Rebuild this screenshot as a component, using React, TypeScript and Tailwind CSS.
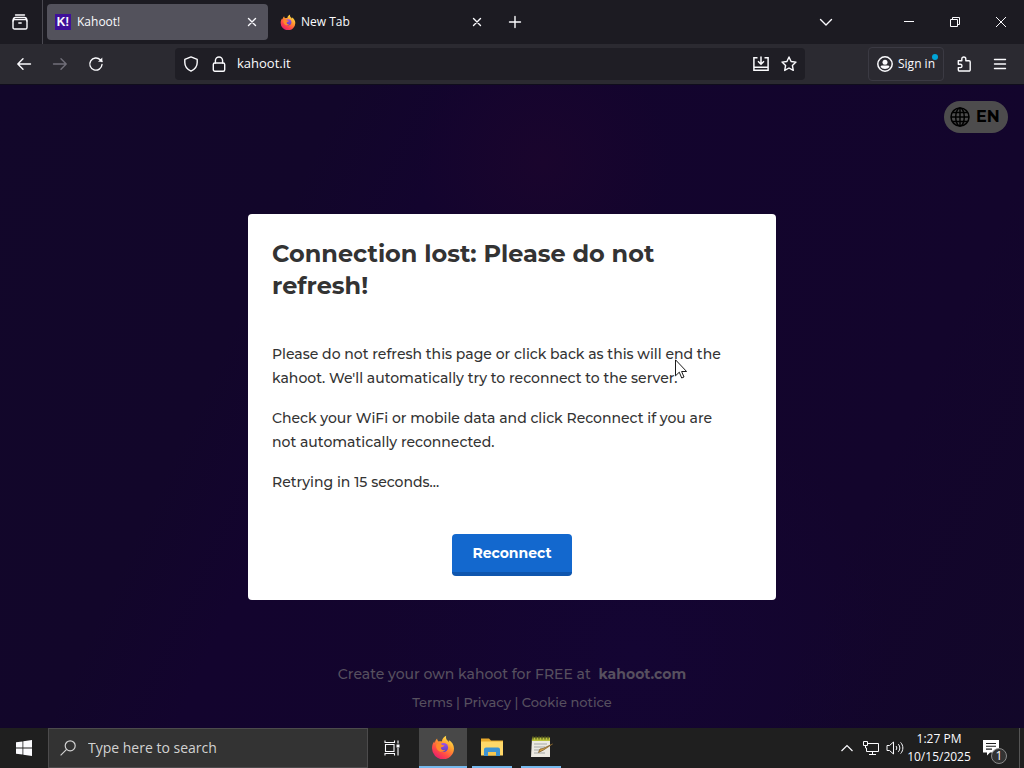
import type { ReactNode } from "react";

function FirefoxLogo({ id, className }: { id: string; className: string }) {
  return (
    <svg viewBox="0 0 24 24" className={className} aria-hidden="true">
      <defs>
        <linearGradient id={`${id}-body`} x1="0.8" y1="0.1" x2="0.25" y2="0.95">
          <stop offset="0" stopColor="#ffe14a" />
          <stop offset="0.35" stopColor="#ff9a2e" />
          <stop offset="0.7" stopColor="#ff4b45" />
          <stop offset="1" stopColor="#e8206c" />
        </linearGradient>
        <linearGradient id={`${id}-globe`} x1="0.5" y1="0" x2="0.5" y2="1">
          <stop offset="0" stopColor="#a052e8" />
          <stop offset="1" stopColor="#5a3fc0" />
        </linearGradient>
      </defs>
      <path
        fill={`url(#${id}-body)`}
        d="M15.2.8c-.6 2 .1 3.500 1.600 5 .6.600 1 1.100 1.300 1.700.1-.9-.1-1.700-.5-2.500 3.300 1.700 5.400 5 5.400 8.500A11 11 0 0 1 1 13.200c0-3 .9-5.300 2.300-7 .1 1 .3 1.500.6 1.900.2-1.800.9-3.300 2.200-4.600.1 1.300.6 2.200 1.500 2.900 1.300-.4 2.500-.2 3.300.1C11.200 3.900 12.700 1.900 15.200.8z"
      />
      <circle cx="12.500" cy="12.500" r="4.600" fill={`url(#${id}-globe)`} />
      <path fill="#ff8a2a" d="M5.500 9c2-.8 3.700-.6 5 .4 1 .7 2.200.8 3 .8-.4 1.300-1.700 1.600-2.700 1.900-.8.300-1 1-.7 1.700.6 1.400 2.300 1.900 4.300 1-1.200 2.300-5.800 3.300-8.200-.3C5 12.600 4.800 10.600 5.500 9z" />
    </svg>
  );
}

function Stroke({ children, className = "h-4 w-4" }: { children: ReactNode; className?: string }) {
  return (
    <svg
      viewBox="0 0 16 16"
      className={`${className} shrink-0`}
      fill="none"
      stroke="currentColor"
      strokeWidth="1.4"
      strokeLinecap="round"
      strokeLinejoin="round"
      aria-hidden="true"
    >
      {children}
    </svg>
  );
}

function CloseIcon() {
  return (
    <Stroke>
      <path d="M4.500 4.500l7 7M11.500 4.500l-7 7" />
    </Stroke>
  );
}

function TabStrip() {
  return (
    <div className="flex h-11 shrink-0 items-center bg-[#1c1b22]">
      <button aria-label="Firefox View" className="flex h-full w-[43px] items-center justify-center border-r border-[#4a4951] pr-[2px]">
        <svg viewBox="0 0 16 16" className="h-4 w-4" fill="none" stroke="currentColor" strokeWidth="1.400" strokeLinecap="round">
          <path d="M3.500 1h9" />
          <rect x="1" y="5.600" width="14" height="9.400" rx="1.600" />
          <path d="M1.100 7c0-2 .7-3.500 2.400-3.500h9c1.700 0 2.400 1.500 2.400 3.500M6.800 9h2.400" />
        </svg>
      </button>

      <div className="ml-1 flex h-9 w-[221px] items-center rounded bg-[#53525c] pl-2">
        <button className="flex min-w-0 flex-1 items-center gap-[6px] text-xs">
          <span className="flex h-4 w-4 shrink-0 items-center justify-center bg-[#3f1099] font-['Liberation_Sans'] text-[12px] font-bold leading-4">
            K!
          </span>
          Kahoot!
        </button>
        <button aria-label="Close Kahoot! tab" className="flex h-6 w-8 items-center justify-center">
          <CloseIcon />
        </button>
      </div>

      <div className="ml-1 flex h-9 w-[221px] items-center rounded pl-2">
        <button className="flex min-w-0 flex-1 items-center gap-[5px] text-xs">
          <FirefoxLogo id="tab-fx" className="h-4 w-4 shrink-0" />
          New Tab
        </button>
        <button aria-label="Close New Tab" className="flex h-6 w-8 items-center justify-center">
          <CloseIcon />
        </button>
      </div>

      <button aria-label="Open a new tab" className="ml-1 flex h-9 w-9 items-center justify-center">
        <Stroke>
          <path d="M8 2.500v11M2.500 8h11" />
        </Stroke>
      </button>

      <div className="ml-auto flex h-full items-center">
        <button aria-label="List all tabs" className="mr-11 flex h-9 w-8 items-center justify-center">
          <Stroke>
            <path d="M2.500 5.500L8 11l5.500-5.500" />
          </Stroke>
        </button>
        <button aria-label="Minimize" className="flex h-full w-[46px] items-center justify-center">
          <svg viewBox="0 0 10 10" className="h-[10px] w-[10px]" stroke="currentColor">
            <path d="M0 4.500h10" />
          </svg>
        </button>
        <button aria-label="Restore" className="flex h-full w-[46px] items-center justify-center">
          <svg viewBox="0 0 10 10" className="h-[10px] w-[10px]" fill="none" stroke="currentColor">
            <path d="M.5 2.500h7v7h-7zM2.500 2.500v-2h7v7h-2" />
          </svg>
        </button>
        <button aria-label="Close" className="flex h-full w-[46px] items-center justify-center">
          <svg viewBox="0 0 10 10" className="h-[10px] w-[10px]" stroke="currentColor">
            <path d="M0 0l10 10M10 0L0 10" />
          </svg>
        </button>
      </div>
    </div>
  );
}

function Toolbar() {
  return (
    <div className="flex h-[41px] shrink-0 items-center border-b border-[#100d1c] bg-[#2b2a31] px-2">
      <button aria-label="Go back" className="flex h-8 w-8 items-center justify-center">
        <Stroke>
          <path d="M14.500 8H2M7 2.800L1.800 8 7 13.200" />
        </Stroke>
      </button>
      <button aria-label="Go forward" disabled className="ml-1 flex h-8 w-8 items-center justify-center text-[#716f79]">
        <Stroke>
          <path d="M1.500 8H14M9 2.800L14.200 8 9 13.200" />
        </Stroke>
      </button>
      <button aria-label="Reload" className="ml-1 flex h-8 w-8 items-center justify-center">
        <Stroke>
          <path d="M14 8.500a6.100 6.100 0 1 1-1.700-4.700L14 5.500" />
          <path d="M14.300 1.500v4.300H10z" fill="currentColor" stroke="none" />
        </Stroke>
      </button>

      <div className="mx-[63px] flex h-8 min-w-0 flex-1 items-center rounded bg-[#1f1e25] pl-2 pr-[2px]">
        <Stroke>
          <path d="M8 .9l6.200 2.500v3.200c0 4-2.500 6.900-6.200 8.500-3.700-1.600-6.200-4.500-6.200-8.500V3.400z" />
        </Stroke>
        <span className="w-3" />
        <Stroke>
          <rect x="2.300" y="7" width="11.400" height="8.200" rx="1.500" />
          <path d="M4.400 7V4.600a3.600 3.600 0 0 1 7.200 0V7" />
        </Stroke>
        <input
          aria-label="Search with Google or enter address"
          defaultValue="kahoot.it"
          className="ml-[10px] min-w-0 flex-1 bg-transparent text-[13px] outline-none"
        />
        <button aria-label="Install app" className="flex h-7 w-7 items-center justify-center">
          <svg viewBox="0 0 16 16" className="h-4 w-4" fill="none" stroke="currentColor" strokeWidth="1.500">
            <path d="M4.500 1.800H.9v12.500h14.200V1.800h-3.600M1 11.200h14M8 .5v7.500M5 5.300l3 3 3-3" />
          </svg>
        </button>
        <button aria-label="Bookmark this page" className="flex h-7 w-7 items-center justify-center">
          <Stroke>
            <path d="M8 1l2.100 4.500 4.900.6-3.600 3.400.9 4.900L8 12l-4.300 2.400.9-4.900L1 6.100l4.900-.6z" />
          </Stroke>
        </button>
      </div>

      <button className="relative flex h-[34px] w-[76px] items-center gap-[5px] rounded border border-[#3b3a43] pl-2 text-xs whitespace-nowrap">
        <svg viewBox="0 0 16 16" className="h-4 w-4 shrink-0" fill="none" stroke="currentColor" strokeWidth="1.500">
          <circle cx="8" cy="8" r="7.200" />
          <circle cx="8" cy="6.200" r="2.500" fill="currentColor" stroke="none" />
          <path d="M3.500 11c0-1 .8-1.600 1.800-1.600h5.400c1 0 1.800.6 1.800 1.600A6 6 0 0 1 8 13a6 6 0 0 1-4.500-2z" fill="currentColor" stroke="none" />
        </svg>
        Sign in
        <span className="absolute right-[5px] top-[6px] h-[6px] w-[6px] rounded-full bg-[#00a5d8]" />
      </button>
      <button aria-label="Extensions" className="ml-1 flex h-8 w-8 items-center justify-center">
        <Stroke>
          <path d="M2.300 4.800h3.500V3a2 2 0 0 1 4 0v1.800h3.200a1.200 1.200 0 0 1 1.200 1.200v7.800a1.200 1.200 0 0 1-1.200 1.200H3.500a1.200 1.200 0 0 1-1.200-1.200v-2.200h2a1.700 1.700 0 0 0 0-3.400h-2z" />
        </Stroke>
      </button>
      <button aria-label="Open application menu" className="ml-1 flex h-8 w-8 items-center justify-center">
        <Stroke>
          <path d="M2.500 3.500h11M2.500 8h11M2.500 12.500h11" />
        </Stroke>
      </button>
    </div>
  );
}

function ReconnectDialog() {
  return (
    <div className="absolute inset-0 flex items-center justify-center">
      <div
        role="dialog"
        aria-labelledby="dialog-title"
        className="relative w-[528px] rounded bg-white p-6 text-[#333333]"
      >
        <h1 id="dialog-title" className="text-2xl font-bold leading-8">
          Connection lost: Please do not
          <br />
          refresh!
        </h1>
        <div className="mt-10 flex flex-col gap-4 text-sm font-medium leading-6">
          <p>
            Please do not refresh this page or click back as this will end the
            <br />
            kahoot. We'll automatically try to reconnect to the server.
          </p>
          <p>
            Check your WiFi or mobile data and click Reconnect if you are
            <br />
            not automatically reconnected.
          </p>
          <p>Retrying in 15 seconds...</p>
        </div>
        <button className="mx-auto mt-10 flex h-[42px] w-[120px] items-center justify-center rounded border-b-4 border-[#0f56ae] bg-[#1368ce] text-sm font-bold text-white">
          Reconnect
        </button>

        {/* mouse pointer */}
        <svg viewBox="0 0 12 20" className="absolute left-[427px] top-[145px] h-5 w-3" aria-hidden="true">
          <path d="M.5.8v16l3.800-3.600 2.400 5.800 2.300-1-2.400-5.500h5z" fill="#fff" stroke="#000" strokeWidth="0.900" />
        </svg>
      </div>
    </div>
  );
}

function GamePage() {
  return (
    <main className="relative flex min-h-[460px] flex-1 flex-col justify-between overflow-hidden bg-[#13072b] font-['Montserrat','Inter',sans-serif]">
      <div className="absolute inset-0 bg-[radial-gradient(circle_at_53%_12%,#1a052d_0%,transparent_16%),radial-gradient(circle_at_62%_88%,#140533_0%,transparent_30%),linear-gradient(115deg,#12072a_0%,#12062a_26%,#13042e_36%,#13052c_80%,#120729_100%)]" />
      <button className="relative mr-4 mt-4 flex h-8 w-16 items-center gap-[6px] self-end rounded-full bg-[#4d4c4d] pl-[6px] text-base font-bold text-black">
        <svg viewBox="0 0 20 20" className="h-5 w-5 shrink-0" fill="none" stroke="currentColor" strokeWidth="1.500" aria-hidden="true">
          <circle cx="10" cy="10" r="9" />
          <ellipse cx="10" cy="10" rx="4.300" ry="9" />
          <path d="M10 1v18M1 10h18M2.500 5.500h15M2.500 14.500h15" />
        </svg>
        EN
      </button>
      <footer className="relative flex flex-col items-center gap-2 pb-4 text-[#57505f]">
        <p className="text-sm font-medium">
          Create your own kahoot for FREE at{" "}
          <a href="#" className="ml-1 font-bold">
            kahoot.com
          </a>
        </p>
        <p className="text-[13px] font-medium leading-5">
          <a href="#">Terms</a> | <a href="#">Privacy</a> | <a href="#">Cookie notice</a>
        </p>
      </footer>
      <ReconnectDialog />
    </main>
  );
}

function Taskbar() {
  return (
    <div className="flex h-10 shrink-0 items-center bg-[#1f1f1f]">
      <button aria-label="Start" className="flex h-full w-12 items-center justify-center">
        <svg viewBox="0 0 16 16" className="h-4 w-4" fill="currentColor">
          <path d="M0 2.300l6.500-.9v6.200H0zM7.300 1.300L16 0v7.600H7.300zM0 8.400h6.500v6.200L0 13.700zM7.300 8.400H16V16l-8.700-1.200z" />
        </svg>
      </button>
      <label className="flex h-full w-80 items-center gap-3 border border-[#4c4b4c] bg-[#333333] pl-[11px] text-[#d2d2d2]">
        <svg viewBox="0 0 16 16" className="h-4 w-4 shrink-0" fill="none" stroke="currentColor" strokeWidth="1.200">
          <circle cx="10.200" cy="5.800" r="5" />
          <path d="M6.600 9.400L.6 15.400" />
        </svg>
        <input aria-label="Search" placeholder="Type here to search" className="min-w-0 flex-1 bg-transparent text-sm outline-none placeholder:text-[#d2d2d2]" />
      </label>
      <button aria-label="Task View" className="flex h-full w-[51px] items-center justify-center pr-1">
        <svg viewBox="0 0 16 16" className="h-4 w-4" fill="none" stroke="currentColor" strokeWidth="1.100">
          <path d="M1 .5v2h9.500v-2M1 15.500v-2h9.500v2M1.500 4.500h8.500v7H1.500zM14 .5v3M14 8v7.500" />
          <rect x="12.500" y="4.500" width="3" height="3" fill="currentColor" stroke="none" />
        </svg>
      </button>
      <button aria-label="Firefox" className="flex h-full w-12 items-center justify-center border-b-2 border-[#76b9ed] bg-[#484848]">
        <FirefoxLogo id="task-fx" className="h-6 w-6" />
      </button>
      <button aria-label="File Explorer" className="ml-[5px] flex h-full w-10 items-center justify-center border-b-2 border-[#76b9ed]">
        <svg viewBox="0 0 24 24" className="h-6 w-6">
          <path d="M1 3.500h8l2 2h12v4H1z" fill="#e8a92c" />
          <path d="M1 6.500h22v14H1z" fill="#ffd869" />
          <path d="M4 21v-6.500a2 2 0 0 1 2-2h12a2 2 0 0 1 2 2V21h-4v-4H8v4z" fill="#3d93d2" />
          <path d="M8 17h8v3.500H8z" fill="#f5c752" />
        </svg>
      </button>
      <button aria-label="Notepad++" className="ml-[9px] flex h-full w-10 items-center justify-center border-b-2 border-[#76b9ed]">
        <svg viewBox="0 0 24 24" className="h-6 w-6">
          <path d="M3 3h18v19H2z" fill="#eceae2" />
          <path d="M3 2.500h18V6H3z" fill="#b9c23c" />
          <path d="M4 1v3.500M7 1v3.500M10 1v3.500M13 1v3.500M16 1v3.500M19 1v3.500" stroke="#4d4f1c" strokeWidth="1.100" />
          <path d="M5 9h13M5 12h11M5 15h7M5 18h11" stroke="#a5a9a8" />
          <path d="M23.500 9l-9 6-5 2.500 1.500-3.500 3-.5z" fill="#d7a342" stroke="#80602e" strokeWidth="0.800" />
        </svg>
      </button>

      <div className="ml-auto flex h-full items-center">
        <button aria-label="Show hidden icons" className="flex h-full w-6 items-center justify-center">
          <svg viewBox="0 0 12 8" className="h-2 w-3" fill="none" stroke="currentColor" strokeWidth="1.200">
            <path d="M.5 7L6 1.500 11.500 7" />
          </svg>
        </button>
        <button aria-label="Network" className="flex h-full w-6 items-center justify-center">
          <svg viewBox="0 0 16 16" className="h-4 w-4" fill="none" stroke="currentColor">
            <path d="M5 3.500h10.500v8h-12V8M9.500 11.500v3M6 14.500h7M.5 1.500h4v4h-4zM2.500 5.500v2.500h1" />
          </svg>
        </button>
        <button aria-label="Volume" className="flex h-full w-6 items-center justify-center">
          <svg viewBox="0 0 18 16" className="h-4 w-[18px]" fill="none" stroke="currentColor">
            <path d="M1 5.500h2.500L7.500 2v12l-4-3.500H1zM10 6c1 1.200 1 2.800 0 4M12.300 4.200c2 2.200 2 5.400 0 7.600M14.600 2.400c3 3.200 3 8 0 11.200" />
          </svg>
        </button>
        <button className="flex h-full w-16 flex-col items-center justify-center text-xs leading-[18px]">
          <span>1:27 PM</span>
          <span>10/15/2025</span>
        </button>
        <button aria-label="1 new notification" className="relative flex h-full w-12 items-center justify-center pr-2">
          <svg viewBox="0 0 18 18" className="h-[18px] w-[18px]">
            <path d="M1 1h16v12.500H8L5 16.500v-3H1z" fill="#fff" />
            <path d="M4 4.500h10M4 7.300h10M4 10.100h6" stroke="#1f1f1f" strokeWidth="1.100" />
          </svg>
          <span className="absolute bottom-1 right-3 flex h-4 w-4 items-center justify-center rounded-full border border-[#8a8a8a] bg-[#333333] text-xs leading-none">
            1
          </span>
        </button>
        <div className="mr-1 h-full w-px bg-[#555555]" />
      </div>
    </div>
  );
}

export default function App() {
  return (
    <div className="flex min-h-screen flex-col bg-[#1c1b22] font-['Segoe_UI','Open_Sans',sans-serif] text-[#fbfbfe]">
      <TabStrip />
      <Toolbar />
      <GamePage />
      <Taskbar />
    </div>
  );
}
